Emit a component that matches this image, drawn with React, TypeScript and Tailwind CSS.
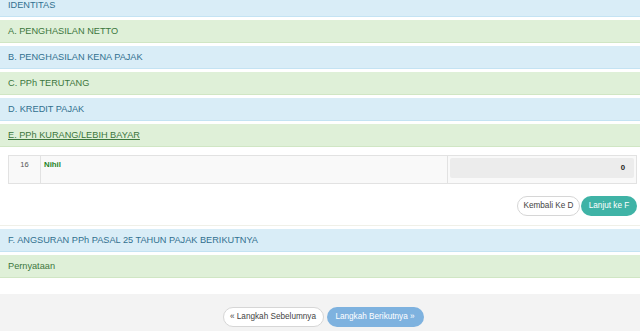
import React from "react";

const font = { fontFamily: '"Liberation Sans", Arial, sans-serif' };

function Bar({ label, tone, underline = false }: { label: string; tone: "blue" | "green"; underline?: boolean }) {
  const cls =
    tone === "blue"
      ? "bg-[#d9edf7] border-b border-[#c4e3f3] text-[#31708f]"
      : "bg-[#dff0d8] border-b border-[#d0e6c4] text-[#3c763d]";
  return (
    <div className={`h-[23px] flex items-center pt-[2px] px-[8px] text-[9.2px] ${cls}`}>
      <span className={underline ? "underline" : ""}>{label}</span>
    </div>
  );
}

export default function App() {
  return (
    <div style={font} className="w-[640px] h-[331px] overflow-hidden bg-white">
      <div className="flex flex-col gap-[3px] mt-[-6px]">
        <Bar label="IDENTITAS" tone="blue" />
        <Bar label="A. PENGHASILAN NETTO" tone="green" />
        <Bar label="B. PENGHASILAN KENA PAJAK" tone="blue" />
        <Bar label="C. PPh TERUTANG" tone="green" />
        <Bar label="D. KREDIT PAJAK" tone="blue" />
        <div>
          <Bar label="E. PPh KURANG/LEBIH BAYAR" tone="green" underline />
          <div className="h-[79px] pt-[8px] pl-[8px] pr-[3px] bg-white border-b border-[#f0f0e8]">
            <div className="flex h-[29px] border border-[#e2e2e2] bg-[#f9f9f9]">
              <div className="w-[32px] border-r border-[#e2e2e2] flex justify-center pt-[3px] text-[7.5px] text-[#555]">16</div>
              <div className="flex-1 border-r border-[#e2e2e2] pl-[3px] pt-[3px] text-[7.8px] font-bold text-[#25831f]">Nihil</div>
              <div className="w-[188px] p-[2px]">
                <div className="h-[20px] bg-[#ececec] rounded-[2px] flex items-center justify-end pr-[9px] text-[7.8px] font-bold text-[#222]">0</div>
              </div>
            </div>
            <div className="flex justify-end gap-[1px] mt-[12px]">
              <div className="h-[20px] w-[63px] rounded-full border border-[#d6d6d6] bg-white flex items-center justify-center text-[8.2px] text-[#444]">Kembali Ke D</div>
              <div className="h-[20px] w-[56px] rounded-full bg-[#3fb3a6] flex items-center justify-center text-[8.2px] text-white">Lanjut ke F</div>
            </div>
          </div>
        </div>
        <Bar label="F. ANGSURAN PPh PASAL 25 TAHUN PAJAK BERIKUTNYA" tone="blue" />
        <Bar label="Pernyataan" tone="green" />
      </div>
      <div className="h-[16px] bg-white" />
      <div className="h-[50px] bg-[#f3f3f3] flex justify-center gap-[3px] pt-[13px] pl-[6px]">
        <div className="h-[20px] w-[101px] rounded-full border border-[#d6d6d6] bg-white flex items-center justify-center text-[8.2px] text-[#444]">« Langkah Sebelumnya</div>
        <div className="h-[20px] w-[97px] rounded-full bg-[#7eb2df] flex items-center justify-center text-[8.2px] text-white">Langkah Berikutnya »</div>
      </div>
    </div>
  );
}
